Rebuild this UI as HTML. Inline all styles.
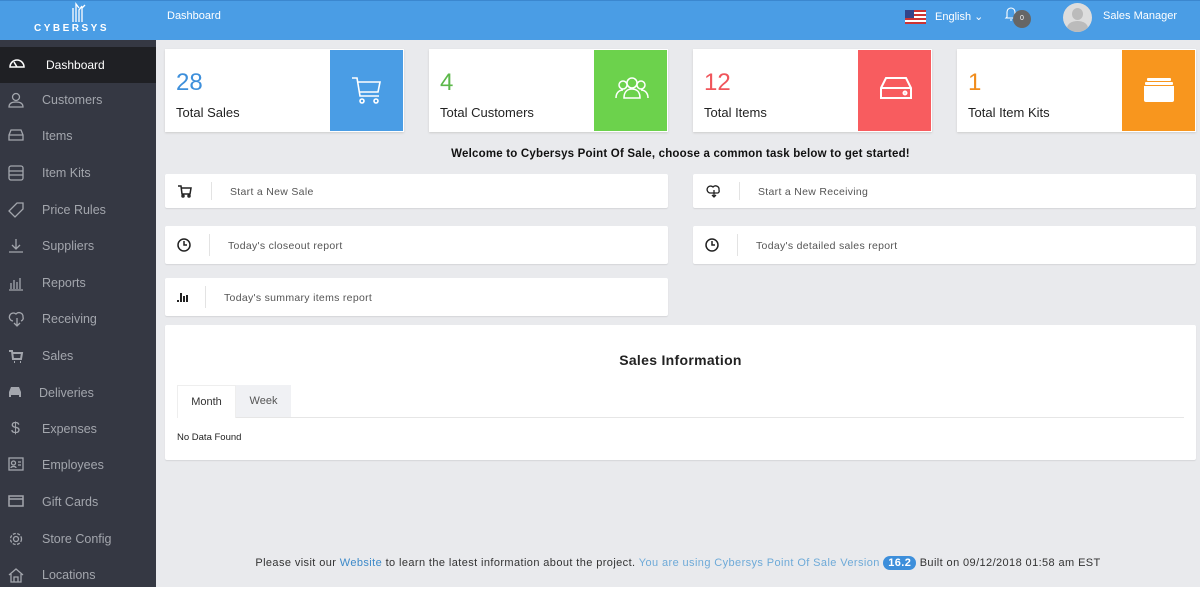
<!DOCTYPE html>
<html><head><meta charset="utf-8"><style>
*{box-sizing:border-box;margin:0;padding:0}
body{width:1200px;height:600px;overflow:hidden;background:#fff;font-family:"Liberation Sans",sans-serif;position:relative}
.hdr{position:absolute;left:0;top:0;width:1200px;height:40px;background:#4a9de5;border-top:1px solid #3b87cf}
.side{position:absolute;left:0;top:40px;width:156px;height:547px;background:#353843}
.main{position:absolute;left:156px;top:40px;width:1044px;height:547px;background:#e9eaed}
.nav{position:absolute;left:0;width:156px;height:36px;color:#a3a6ad;font-size:12.5px;line-height:36px}
.nav span{position:absolute;left:42px}
.nav svg{position:absolute;left:8px;top:10px}
.nav.act{background:#1f2024;color:#fff;font-size:12px}
.nav.act span{left:46px}
.card{position:absolute;top:49px;width:239px;height:83px;background:#fff;box-shadow:0 1px 2px #ccc}
.card .n{position:absolute;left:11px;top:20px;font-size:24px}
.card .l{position:absolute;left:11px;top:56px;font-size:13px;color:#222}
.card .b{position:absolute;right:1px;top:1px;width:73px;height:81px}
.card .b svg{position:absolute;left:21px;top:24px}
.task{position:absolute;background:#fff;border-radius:2px;box-shadow:0 1px 1px #d5d6d9;font-size:10.5px;color:#555;letter-spacing:.3px}
.task .sep{position:absolute;top:8px;bottom:8px;width:1px;background:#e3e3e3}
.task .t{position:absolute;top:50%;transform:translateY(-40%)}
.task svg{position:absolute;left:12px;top:50%;transform:translateY(-50%)}
</style></head><body>
<div class="hdr">
 <svg style="position:absolute;left:68px;top:1px" width="22" height="20" viewBox="0 0 22 20" fill="none" stroke="#fff" stroke-width="1.3"><path d="M5 20V6M8 20V2l3 4M11 20V8l3-4M14 20V6l3-3"/></svg>
 <div style="position:absolute;left:34px;top:22px;color:#fff;font-size:10px;font-weight:bold;letter-spacing:2.5px">CYBERSYS</div>
 <div style="position:absolute;left:167px;top:9px;color:#fff;font-size:11px">Dashboard</div>
 <svg style="position:absolute;left:905px;top:9px" width="21" height="14" viewBox="0 0 21 14"><rect width="21" height="14" fill="#c33"/><rect y="2" width="21" height="2" fill="#fff"/><rect y="6" width="21" height="2" fill="#fff"/><rect y="10" width="21" height="2" fill="#fff"/><rect width="9" height="8" fill="#33448a"/></svg>
 <div style="position:absolute;left:935px;top:9px;color:#fff;font-size:11px">English ⌄</div>
 <svg style="position:absolute;left:1004px;top:4px" width="14" height="16" viewBox="0 0 14 16" fill="none" stroke="#fff" stroke-width="1.1"><path d="M3 12V7a4 4 0 0 1 8 0v5l1 1H2z M6 15h2"/></svg>
 <div style="position:absolute;left:1013px;top:9px;width:18px;height:18px;border-radius:50%;background:#666;color:#fff;font-size:7px;text-align:center;line-height:18px">0</div>
 <div style="position:absolute;left:1063px;top:2px;width:29px;height:29px;border-radius:50%;background:#ddd;overflow:hidden"><div style="position:absolute;left:9px;top:5px;width:11px;height:12px;border-radius:50%;background:#bbb"></div><div style="position:absolute;left:4px;top:18px;width:21px;height:14px;border-radius:50%;background:#bbb"></div></div>
 <div style="position:absolute;left:1103px;top:9px;color:#fff;font-size:11px">Sales Manager</div>
</div>
<div class="side">
 <div class="nav act" style="top:7px"><svg width="18" height="14" viewBox="0 0 18 14" fill="none" stroke="#fff" stroke-width="1.5"><path d="M2 10a7 7 0 0 1 14 0zM9 10L6 5"/></svg><span>Dashboard</span></div>
 <div class="nav" style="top:42px"><svg width="16" height="16" viewBox="0 0 16 16" fill="none" stroke="#a3a6ad" stroke-width="1.3"><circle cx="8" cy="5" r="3.5"/><path d="M1 15c0-4 3-5 7-5s7 1 7 5z"/></svg><span>Customers</span></div>
 <div class="nav" style="top:78px"><svg width="16" height="14" viewBox="0 0 16 14" fill="none" stroke="#a3a6ad" stroke-width="1.3"><path d="M1 7l2-5h10l2 5v5H1zM1 7h14"/></svg><span>Items</span></div>
 <div class="nav" style="top:115px"><svg width="16" height="16" viewBox="0 0 16 16" fill="none" stroke="#a3a6ad" stroke-width="1.3"><rect x="1" y="1" width="14" height="14" rx="2"/><path d="M1 6h14M1 10h14"/></svg><span>Item Kits</span></div>
 <div class="nav" style="top:152px"><svg width="16" height="16" viewBox="0 0 16 16" fill="none" stroke="#a3a6ad" stroke-width="1.3"><path d="M9 1h6v6l-8 8-6-6z"/></svg><span>Price Rules</span></div>
 <div class="nav" style="top:188px"><svg width="16" height="16" viewBox="0 0 16 16" fill="none" stroke="#a3a6ad" stroke-width="1.3"><path d="M8 1v10M4 7l4 4 4-4M1 14h14"/></svg><span>Suppliers</span></div>
 <div class="nav" style="top:225px"><svg width="16" height="16" viewBox="0 0 16 16" fill="none" stroke="#a3a6ad" stroke-width="1.3"><path d="M1 15h14M3 14V8M6 14V5M9 14V7M12 14V3"/></svg><span>Reports</span></div>
 <div class="nav" style="top:261px"><svg width="18" height="16" viewBox="0 0 18 16" fill="none" stroke="#a3a6ad" stroke-width="1.3"><path d="M5 10a4 4 0 1 1 3-7 4 4 0 0 1 7 3 3 3 0 0 1-2 4M9 7v8M6 12l3 3 3-3"/></svg><span>Receiving</span></div>
 <div class="nav" style="top:298px"><svg width="16" height="16" viewBox="0 0 16 16" fill="none" stroke="#a3a6ad" stroke-width="2"><path d="M1 3h3l1 8h8l1-6H5M6 14h1M12 14h1"/></svg><span>Sales</span></div>
 <div class="nav" style="top:335px"><svg width="14" height="14" viewBox="0 0 14 14" fill="#a3a6ad"><path d="M1 7l2-5h8l2 5v5h-2v-2H3v2H1z"/></svg><span style="left:39px">Deliveries</span></div>
 <div class="nav" style="top:371px"><span style="left:11px;font-size:16px">$</span><span>Expenses</span></div>
 <div class="nav" style="top:407px"><svg width="16" height="14" viewBox="0 0 16 14" fill="none" stroke="#a3a6ad" stroke-width="1.3"><rect x="1" y="1" width="14" height="12"/><circle cx="5.5" cy="6" r="2"/><path d="M3 11c0-2 5-2 5 0M10 5h3M10 8h3"/></svg><span>Employees</span></div>
 <div class="nav" style="top:444px"><svg width="16" height="14" viewBox="0 0 16 14" fill="none" stroke="#a3a6ad" stroke-width="1.5"><rect x="1" y="2" width="14" height="10"/><path d="M1 5h14"/></svg><span>Gift Cards</span></div>
 <div class="nav" style="top:481px"><svg width="16" height="16" viewBox="0 0 16 16" fill="none" stroke="#a3a6ad" stroke-width="1.3"><circle cx="8" cy="8" r="2.5"/><circle cx="8" cy="8" r="5.5" stroke-dasharray="3 1.5"/></svg><span>Store Config</span></div>
 <div class="nav" style="top:517px"><svg width="16" height="16" viewBox="0 0 16 16" fill="none" stroke="#a3a6ad" stroke-width="1.3"><path d="M1 8l7-6 7 6M3 7v8h10V7M6 15v-5h4v5"/></svg><span>Locations</span></div>
</div>
<div class="main"></div>

<div class="card" style="left:165px"><div class="n" style="color:#3d8fdb">28</div><div class="l">Total Sales</div><div class="b" style="background:#4a9de5"><svg width="32" height="32" viewBox="0 0 32 32" fill="none" stroke="#fff" stroke-width="1.6"><path d="M1 4h5l3 18h19M7 8h22l-2 10H9"/><circle cx="11" cy="27" r="2"/><circle cx="25" cy="27" r="2"/></svg></div></div>
<div class="card" style="left:429px"><div class="n" style="color:#5cb84a">4</div><div class="l">Total Customers</div><div class="b" style="background:#6cd24c"><svg width="34" height="30" viewBox="0 0 34 30" fill="none" stroke="#fff" stroke-width="1.5"><circle cx="17" cy="9" r="5"/><circle cx="8" cy="11" r="4"/><circle cx="26" cy="11" r="4"/><path d="M9 24c0-6 3-9 8-9s8 3 8 9zM1 24c0-5 3-8 7-8M33 24c0-5-3-8-7-8"/></svg></div></div>
<div class="card" style="left:693px"><div class="n" style="color:#f0555b">12</div><div class="l">Total Items</div><div class="b" style="background:#f85c5f"><svg width="34" height="30" viewBox="0 0 34 30" fill="none" stroke="#fff" stroke-width="2"><path d="M2 14l5-10h20l5 10v10H2zM2 14h30"/><circle cx="26" cy="19" r="1.5"/></svg></div></div>
<div class="card" style="left:957px"><div class="n" style="color:#f08c1c">1</div><div class="l">Total Item Kits</div><div class="b" style="background:#f8961e"><svg width="32" height="30" viewBox="0 0 32 30" fill="#fff"><rect x="4" y="4" width="24" height="3" rx="1"/><rect x="2" y="8" width="28" height="3" rx="1"/><path d="M1 12h30v14a2 2 0 0 1-2 2H3a2 2 0 0 1-2-2z"/></svg></div></div>

<div style="position:absolute;left:165px;width:1031px;top:148px;text-align:center;font-size:11.5px;color:#111;font-weight:bold;letter-spacing:.2px">Welcome to Cybersys Point Of Sale, choose a common task below to get started!</div>

<div class="task" style="left:165px;top:174px;width:503px;height:34px"><svg width="16" height="14" viewBox="0 0 16 14" fill="none" stroke="#222" stroke-width="1.5"><path d="M1 2h3l1 8h8l1-6H4"/><circle cx="6" cy="12" r="1"/><circle cx="12" cy="12" r="1"/></svg><div class="sep" style="left:46px"></div><div class="t" style="left:65px">Start a New Sale</div></div>
<div class="task" style="left:693px;top:174px;width:503px;height:34px"><svg width="18" height="14" viewBox="0 0 18 14" fill="none" stroke="#222" stroke-width="1.3"><path d="M5 9a3.5 3.5 0 1 1 3-6 3.5 3.5 0 0 1 6 3 2.5 2.5 0 0 1-1 3H5zM9 6v7M7 11l2 2 2-2"/></svg><div class="sep" style="left:46px"></div><div class="t" style="left:65px">Start a New Receiving</div></div>
<div class="task" style="left:165px;top:226px;width:503px;height:38px"><svg width="14" height="14" viewBox="0 0 14 14" fill="none" stroke="#222" stroke-width="1.5"><circle cx="7" cy="7" r="6"/><path d="M7 3v4h3"/></svg><div class="sep" style="left:44px"></div><div class="t" style="left:63px">Today's closeout report</div></div>
<div class="task" style="left:693px;top:226px;width:503px;height:38px"><svg width="14" height="14" viewBox="0 0 14 14" fill="none" stroke="#222" stroke-width="1.5"><circle cx="7" cy="7" r="6"/><path d="M7 3v4h3"/></svg><div class="sep" style="left:44px"></div><div class="t" style="left:63px">Today's detailed sales report</div></div>
<div class="task" style="left:165px;top:278px;width:503px;height:38px"><svg width="12" height="12" viewBox="0 0 12 12" fill="#222"><rect x="0" y="9" width="2" height="2"/><rect x="3" y="2" width="2" height="9"/><rect x="6" y="5" width="2" height="6"/><rect x="9" y="4" width="2" height="7"/></svg><div class="sep" style="left:40px"></div><div class="t" style="left:59px">Today's summary items report</div></div>

<div style="position:absolute;left:165px;top:325px;width:1031px;height:135px;background:#fff;border-radius:2px;box-shadow:0 1px 1px #d5d6d9">
 <div style="position:absolute;left:0;width:100%;top:27px;text-align:center;font-size:14px;font-weight:bold;color:#222;letter-spacing:.3px">Sales Information</div>
 <div style="position:absolute;left:12px;right:12px;top:92px;height:1px;background:#e6e6e6"></div>
 <div style="position:absolute;left:12px;top:60px;width:59px;height:33px;background:#fff;border:1px solid #eee;border-bottom:none;font-size:11px;color:#333;text-align:center;line-height:32px">Month</div>
 <div style="position:absolute;left:71px;top:60px;width:55px;height:32px;background:#f0f1f4;font-size:11px;color:#555;text-align:center;line-height:32px">Week</div>
 <div style="position:absolute;left:12px;top:107px;font-size:9.5px;color:#222">No Data Found</div>
</div>

<div style="position:absolute;left:156px;width:1044px;top:557px;text-align:center;font-size:11px;color:#333;letter-spacing:.4px">Please visit our <span style="color:#3d8ac9">Website</span> to learn the latest information about the project. <span style="color:#6eaad8">You are using Cybersys Point Of Sale Version</span> <span style="background:#3d8fdb;color:#fff;font-weight:bold;border-radius:8px;padding:1px 5px">16.2</span> Built on 09/12/2018 01:58 am EST</div>
</body></html>
